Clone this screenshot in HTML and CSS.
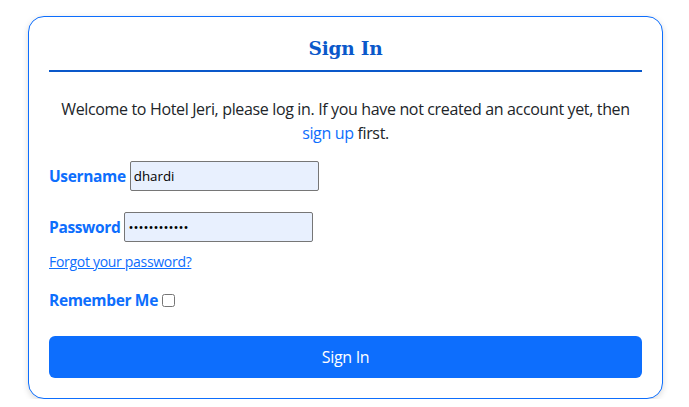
FILE: index.html
```html
<!DOCTYPE html>
<html lang="en">
<head>
<meta charset="utf-8">
<title>Sign In</title>
<link rel="stylesheet" href="styles.css">
</head>
<body>
<div class="page">
  <div class="card">
    <div class="card-header">
      <h2 class="title">Sign In</h2>
    </div>
    <p class="intro">Welcome to Hotel Jeri, please log in. If you have not created an account yet, then <a class="link" href="#">sign up</a> first.</p>
    <form class="form">
      <div class="row row-user">
        <label class="label" for="username">Username</label>
        <input class="field" id="username" type="text" value="dhardi">
      </div>
      <div class="row row-pass">
        <label class="label" for="password">Password</label>
        <input class="field" id="password" type="password" value="hotelpasswor">
      </div>
      <a class="forgot" href="#">Forgot your password?</a>
      <div class="row row-remember">
        <label class="label" for="remember">Remember Me</label>
        <input class="check" id="remember" type="checkbox">
      </div>
      <button class="btn" type="button">Sign In</button>
    </form>
  </div>
</div>
</body>
</html>
```
FILE: styles.css
```css
* { box-sizing: border-box; }
html, body { margin: 0; padding: 0; background: #fff; }
body {
  font-family: "Open Sans", "Noto Sans", sans-serif;
  font-size: 16px;
  color: #212529;
}
.page {
  padding: 16px 26px 0 28px;
}
.card {
  border: 1px solid #0d6efd;
  border-radius: 16px;
  padding: 20px;
  box-shadow: 0 2px 6px rgba(0, 0, 0, 0.15);
  background: #fff;
}
.card-header {
  border-bottom: 2px solid #0a58ca;
  padding-bottom: 9px;
}
.title {
  margin: 0;
  font-family: "DejaVu Serif", "Liberation Serif", serif;
  font-weight: bold;
  font-size: 18.5px;
  line-height: 24px;
  text-align: center;
  color: #0a58ca;
  letter-spacing: -0.2px;
}
.intro {
  margin: 25px 0 0;
  text-align: center;
  line-height: 24px;
  letter-spacing: -0.35px;
}
.link { color: #0d6efd; text-decoration: none; }
.form { display: flex; flex-direction: column; align-items: flex-start; }
.row { display: flex; align-items: center; gap: 4px; }
.row-user { margin-top: 16px; }
.row-pass { margin-top: 21px; }
.label {
  font-weight: bold;
  font-size: 15.5px;
  color: #0d6efd;
  letter-spacing: -0.35px;
}
.field {
  width: 189px;
  height: 30px;
  margin: 0;
  padding: 1px 3px;
  border: 1px solid #767676;
  border-radius: 2px;
  background: #e8f0fe;
  font-family: "Open Sans", sans-serif;
  font-size: 13.33px;
  color: #000;
}
.forgot {
  margin-top: 10px;
  font-size: 14px;
  line-height: 20px;
  color: #0d6efd;
  text-decoration: underline;
  letter-spacing: -0.3px;
}
.row-remember { margin-top: 16px; line-height: 24px; }
.check { width: 13px; height: 13px; margin: 0; }
.btn {
  margin-top: 24px;
  width: 100%;
  height: 42px;
  border: none;
  border-radius: 6px;
  background: #0d6efd;
  color: #fff;
  font-family: "Open Sans", sans-serif;
  font-size: 16px;
  letter-spacing: -0.3px;
}
```
